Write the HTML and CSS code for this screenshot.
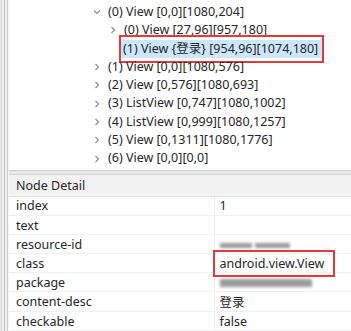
FILE: index.html
```html
<!DOCTYPE html>
<html lang="en">
<head>
    <title>Hierarchy</title>
    <link rel="stylesheet" href="styles.css">
</head>
<body>
    <div class="win">
        <div class="edge"></div>
        <div class="main">
            <div class="tree">
                <div class="row lv1"><svg class="arw" viewBox="0 0 8 8"><polyline points="1,2.5 4,5.5 7,2.5"/></svg>(0) View [0,0][1080,204]</div>
                <div class="row lv2"><svg class="arw" viewBox="0 0 8 8"><polyline points="2.5,1 5.5,4 2.5,7"/></svg>(0) View [27,96][957,180]</div>
                <div class="row lv2"><span class="arw"></span><span class="sel">(1) View {登录} [954,96][1074,180]</span><span class="mark treeMark"></span></div>
                <div class="row lv1"><svg class="arw" viewBox="0 0 8 8"><polyline points="2.5,1 5.5,4 2.5,7"/></svg>(1) View [0,0][1080,576]</div>
                <div class="row lv1"><svg class="arw" viewBox="0 0 8 8"><polyline points="2.5,1 5.5,4 2.5,7"/></svg>(2) View [0,576][1080,693]</div>
                <div class="row lv1"><svg class="arw" viewBox="0 0 8 8"><polyline points="2.5,1 5.5,4 2.5,7"/></svg>(3) ListView [0,747][1080,1002]</div>
                <div class="row lv1"><svg class="arw" viewBox="0 0 8 8"><polyline points="2.5,1 5.5,4 2.5,7"/></svg>(4) ListView [0,999][1080,1257]</div>
                <div class="row lv1"><svg class="arw" viewBox="0 0 8 8"><polyline points="2.5,1 5.5,4 2.5,7"/></svg>(5) View [0,1311][1080,1776]</div>
                <div class="row lv1"><svg class="arw" viewBox="0 0 8 8"><polyline points="2.5,1 5.5,4 2.5,7"/></svg>(6) View [0,0][0,0]</div>
                <div class="row lv1"><svg class="arw" viewBox="0 0 8 8"><polyline points="2.5,1 5.5,4 2.5,7"/></svg>(7) View [0,0][0,0]</div>
            </div>
            <div class="gap"></div>
            <div class="detail">
                <div class="detailHead">Node Detail</div>
                <table class="props">
                    <tr><td>index</td><td>1</td></tr>
                    <tr><td>text</td><td></td></tr>
                    <tr><td>resource-id</td><td><span class="blur b1"></span><span class="blur b2"></span></td></tr>
                    <tr><td>class</td><td class="hl">android.view.View<span class="mark clsMark"></span></td></tr>
                    <tr><td>package</td><td><span class="blur b3"></span></td></tr>
                    <tr><td>content-desc</td><td>登录</td></tr>
                    <tr><td>checkable</td><td>false</td></tr>
                </table>
            </div>
        </div>
    </div>
</body>
</html>
```
FILE: styles.css
```css
body{
    margin: 0;
    background-color: #ffffff;
    font-family: "Noto Sans", "Noto Sans CJK SC", sans-serif;
    font-size: 12.5px;
    color: #262626;
}
.win{
    display: flex;
    width: 351px;
    height: 331px;
    overflow: hidden;
}
.edge{
    width: 9px;
    flex: none;
    background: linear-gradient(to right, #ececec 0, #ececec 1px, #d4d4d4 1px, #d4d4d4 2px, #f2f2f2 2px, #f2f2f2 4px, #c4c4c4 4px, #c4c4c4 5px, #ededed 5px, #ededed 7px, #d0d0d0 7px, #d0d0d0 8px, #f6f6f6 8px);
}
.main{
    flex: 1;
    display: flex;
    flex-direction: column;
}
.tree{
    height: 175px;
    overflow: hidden;
    padding-top: 3px;
    box-sizing: border-box;
    border-bottom: 1px solid #cfcfcf;
}
.row{
    position: relative;
    height: 18.3px;
    line-height: 18.3px;
    display: flex;
    align-items: center;
    white-space: nowrap;
}
.lv1{
    padding-left: 84px;
}
.lv2{
    padding-left: 100px;
}
.arw{
    width: 8px;
    height: 8px;
    flex: none;
    margin-right: 7px;
}
.arw polyline{
    fill: none;
    stroke: #8a8a8a;
    stroke-width: 1.1;
}
.sel{
    background-color: #cce6fb;
    margin-left: -4px;
    padding: 0 5px 0 3px;
}
.mark{
    position: absolute;
    border: 2.5px solid #dc3b3f;
    box-sizing: border-box;
    pointer-events: none;
}
.treeMark{
    left: 110px;
    top: -5px;
    width: 205px;
    height: 28px;
}
.gap{
    height: 3px;
    background-color: #e9e9e9;
    border-bottom: 1px solid #d6d6d6;
}
.detail{
    flex: 1;
}
.detailHead{
    height: 21px;
    line-height: 22px;
    padding-left: 7px;
    background-color: #f2f2f2;
    border-bottom: 1px solid #e4e4e4;
}
.props{
    border-collapse: collapse;
    width: 100%;
}
.props td{
    height: 19px;
    padding: 0 0 0 5px;
    border-bottom: 1px solid #f0f0f0;
    box-sizing: border-box;
}
.props td:first-child{
    width: 205px;
    padding-left: 7px;
    border-right: 1px solid #ececec;
}
.hl{
    position: relative;
}
.clsMark{
    left: -2px;
    top: -4px;
    width: 122px;
    height: 27px;
}
.blur{
    display: inline-block;
    height: 5px;
    background-color: #9a9a9a;
    filter: blur(1.5px);
    vertical-align: middle;
    margin-right: 3px;
}
.b1{
    width: 32px;
}
.b2{
    width: 35px;
}
.b3{
    width: 92px;
    height: 8px;
}
```
